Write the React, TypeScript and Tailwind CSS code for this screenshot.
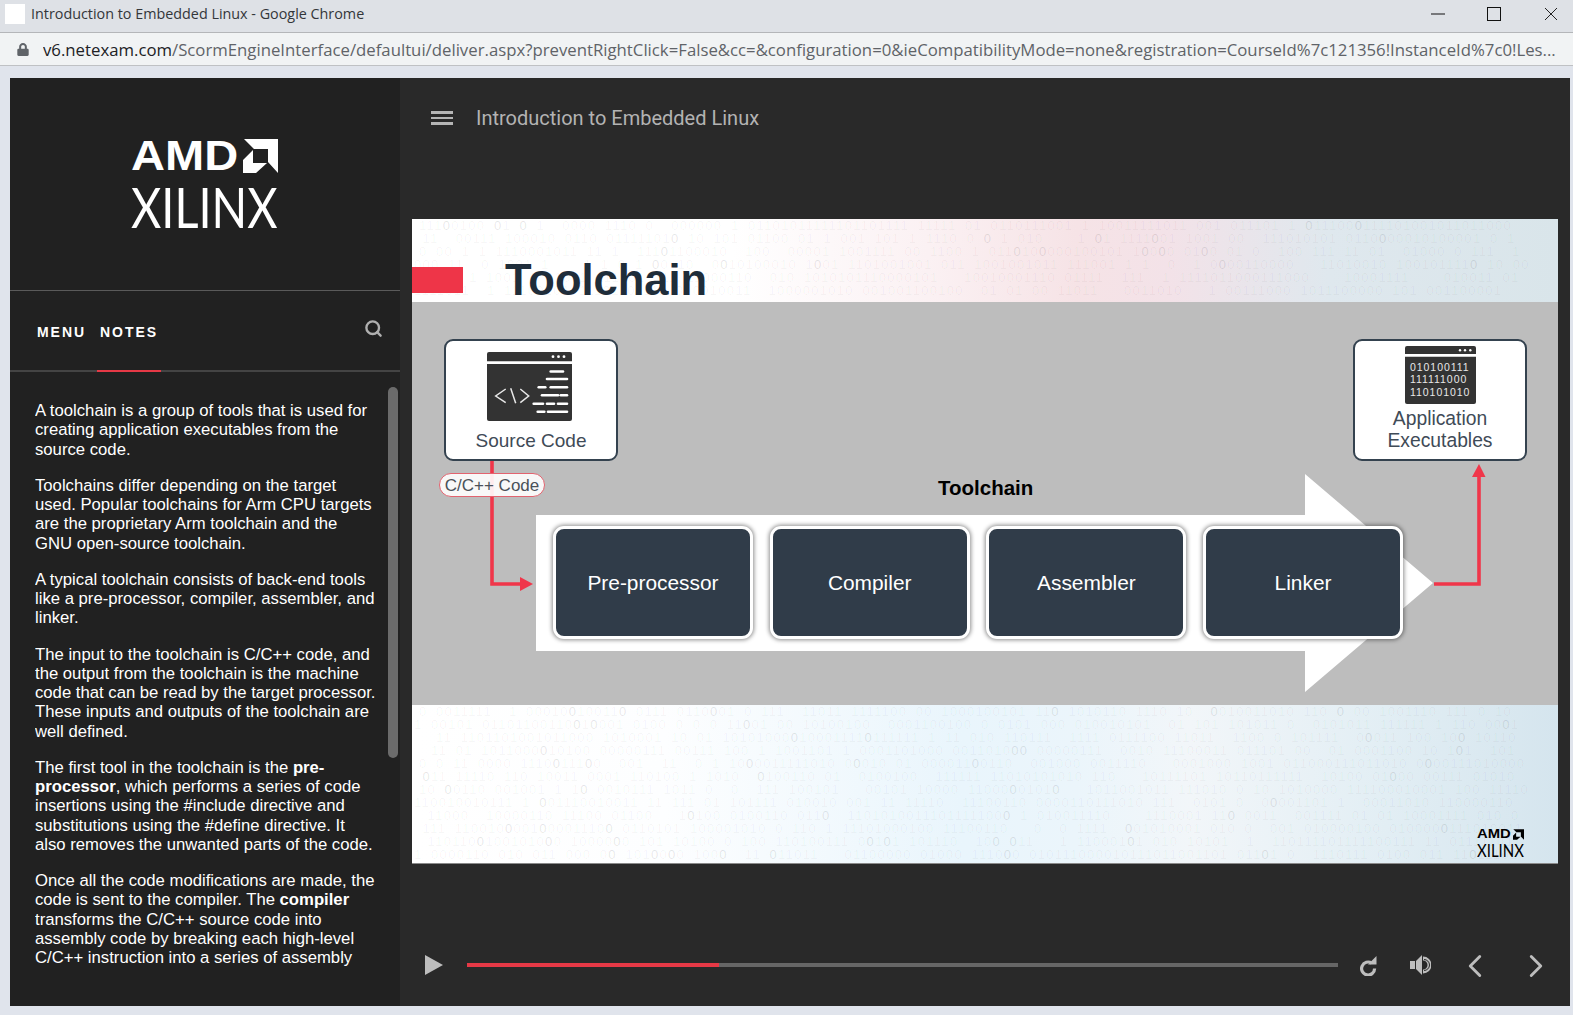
import { ChevronLeft, ChevronRight, Search } from "lucide-react";
import { FaLock } from "react-icons/fa";

// deterministic binary noise for the slide background
function binaryRows(seed: number, rows: number, cols: number) {
  let s = seed;
  const next = () => {
    s = (s * 1103515245 + 12345) & 0x7fffffff;
    return (s >> 8) / (0x7fffffff >> 8);
  };
  return Array.from({ length: rows }, () =>
    Array.from({ length: cols }, () => {
      const r = next();
      if (r < 0.2) return { c: "\u2007", dark: false };
      return { c: r < 0.62 ? "1" : "0", dark: r > 0.965 };
    })
  );
}

function BinaryBg({ seed, rows }: { seed: number; rows: number }) {
  const data = binaryRows(seed, rows, 132);
  return (
    <div className="absolute inset-0 overflow-hidden font-['Liberation_Sans',sans-serif] text-[13px] leading-[13px] tracking-[1.300px] whitespace-nowrap text-black/[.04] select-none">
      {data.map((row, i) => (
        <div key={i} className={i % 2 ? "ml-[2px]" : "ml-[7px]"}>
          {row.map((d, j) =>
            d.dark ? (
              <span key={j} className="text-black/[.1]">
                {d.c}
              </span>
            ) : (
              d.c
            )
          )}
        </div>
      ))}
    </div>
  );
}

function AmdArrow({ className }: { className: string }) {
  return (
    <svg viewBox="0 0 35 34" className={className} fill="currentColor">
      <path d="M1 0H35V34L25 23V10H11Z" />
      <path d="M0 34V21L10 11V24H24L13 34Z" />
    </svg>
  );
}

function CodeIcon() {
  const bars = [
    [63.7, 76, 19.5],
    [60, 67, 27],
    [68, 80, 27],
    [51.7, 58.3, 35.3],
    [63.7, 80, 35.3],
    [55, 71, 43.3],
    [73.7, 80, 43.3],
    [46.7, 56, 51.7],
    [60, 67, 51.7],
    [71, 80, 51.7],
    [50.7, 57.3, 59.7],
    [61, 80, 59.7],
  ];
  return (
    <svg width="85" height="69" viewBox="0 0 85 69" className="-ml-[3px] block">
      <path d="M0 9.3V2a2 2 0 0 1 2-2h81a2 2 0 0 1 2 2v7.3Z" fill="#333" />
      <path d="M0 12h85v55a2 2 0 0 1-2 2H2a2 2 0 0 1-2-2Z" fill="#333" />
      <circle cx="66" cy="4.7" r="1.4" fill="#fff" />
      <circle cx="71.5" cy="4.7" r="1.4" fill="#fff" />
      <circle cx="77" cy="4.7" r="1.4" fill="#fff" />
      {bars.map(([a, b, y], i) => (
        <line key={i} x1={a} x2={b} y1={y} y2={y} stroke="#fff" strokeWidth="2.6" strokeLinecap="round" />
      ))}
      <path
        d="M18.7 37 8.7 44l10 6.7M23.7 36.3l5 15M33.3 37l8.4 7-8.4 6.7"
        fill="none"
        stroke="#e8e8e8"
        strokeWidth="1.5"
      />
    </svg>
  );
}

function BinaryIcon() {
  return (
    <svg width="71" height="58" viewBox="0 0 71 58" className="block">
      <path d="M0 8V2a2 2 0 0 1 2-2h67a2 2 0 0 1 2 2v6Z" fill="#333" />
      <path d="M0 10.7h71V56a2 2 0 0 1-2 2H2a2 2 0 0 1-2-2Z" fill="#333" />
      <circle cx="55" cy="4.3" r="1.2" fill="#fff" />
      <circle cx="60" cy="4.3" r="1.2" fill="#fff" />
      <circle cx="65.3" cy="4.3" r="1.2" fill="#fff" />
      <g fill="#e8e8e8" fontFamily="Liberation Sans, sans-serif" fontSize="10.5" letterSpacing="0.95">
        <text x="5" y="24.5">010100111</text>
        <text x="5" y="37">111111000</text>
        <text x="5" y="49.7">110101010</text>
      </g>
    </svg>
  );
}

function Stage({ name }: { name: string }) {
  return (
    <div className="flex h-[113px] w-[200px] shrink-0 items-center justify-center rounded-[11px] border-[3px] border-white bg-[#303c49] text-[20.9px] text-white shadow-[0_0_4px_1px_rgba(0,0,0,.45)]">
      {name}
    </div>
  );
}

function Diagram() {
  return (
    <div className="relative h-[403px] shrink-0 bg-[#bdbdbd] font-['Liberation_Sans',sans-serif]">
      {/* white arrow + connectors, coordinates relative to the gray panel */}
      <svg className="absolute inset-0" width="1146" height="402" viewBox="0 0 1146 402">
        <path d="M124 213H893V172L1021 281L893 390V349H124Z" fill="#fff" />
        <path d="M80 158V282H110" fill="none" stroke="#f0364a" strokeWidth="3.6" />
        <path d="M108 275l13 7-13 7Z" fill="#f0364a" />
        <path d="M1022 282H1067V174" fill="none" stroke="#f0364a" strokeWidth="3.6" />
        <path d="M1060 175l7-13 6.500 13Z" fill="#f0364a" />
      </svg>

      <div className="absolute left-[32px] top-[37px] flex h-[122px] w-[174px] flex-col items-center rounded-[9px] border-2 border-[#34424f] bg-white pt-[11px] text-[19px] leading-[22px] text-[#3f4b57]">
        <CodeIcon />
        <div className="mt-[9px]">Source Code</div>
      </div>

      <div className="absolute left-[27px] top-[171px] flex h-[24px] w-[106px] items-center justify-center rounded-full border border-[#e2636f] bg-white/90 pt-[1px] text-[17px] text-[#4a5159]">
        C/C++ Code
      </div>

      <div className="absolute left-[941px] top-[37px] flex h-[122px] w-[174px] flex-col items-center rounded-[9px] border-2 border-[#34424f] bg-white pt-[5px] text-center text-[19.3px] leading-[21.500px] text-[#3f4b57]">
        <BinaryIcon />
        <div className="mt-[4px]">
          Application
          <br />
          Executables
        </div>
      </div>

      <div className="absolute left-[526px] top-[174px] text-[20.5px] leading-6 font-bold text-black">Toolchain</div>

      <div className="absolute left-[141px] top-[224px] flex gap-[16.700px]">
        <Stage name="Pre-processor" />
        <Stage name="Compiler" />
        <Stage name="Assembler" />
        <Stage name="Linker" />
      </div>
    </div>
  );
}

function Slide() {
  return (
    <div className="flex h-[645px] w-[1146px] flex-col border-b border-[#8a8a8a] bg-white">
      <div className="relative h-[83px] shrink-0 overflow-hidden bg-[linear-gradient(90deg,#fff_0%,#fff_28%,#fbf1f3_45%,#f6e3e6_58%,#f3e2e8_66%,#dfe8ee_80%,#d9e5ea_100%)]">
        <BinaryBg seed={7} rows={6} />
        <div className="absolute left-0 top-[48px] h-[26px] w-[51px] bg-[#ee3548]" />
        <div className="absolute left-[93px] top-[38px] font-['Liberation_Sans',sans-serif] text-[43.500px] leading-[46px] font-bold text-[#1f2d3a]">
          Toolchain
        </div>
      </div>
      <Diagram />
      <div className="relative flex-1 overflow-hidden bg-[linear-gradient(90deg,#fff_0%,#fdfeff_22%,#e9f5fc_48%,#ebf5fb_58%,#f2f6f9_68%,#e2eef4_85%,#d5e5ee_100%)]">
        <BinaryBg seed={91} rows={12} />
        <div className="absolute left-[1065px] top-[123px] w-[47px] text-black">
          <div className="flex items-center justify-between">
            <span className="origin-left scale-x-[1.1] font-['Liberation_Sans',sans-serif] text-[13.500px] leading-[12px] font-bold">AMD</span>
            <AmdArrow className="h-[11px] w-[11px]" />
          </div>
          <div className="mt-[2px] origin-left scale-x-[.83] font-['Lato',sans-serif] text-[18px] leading-[16px] whitespace-nowrap">XILINX</div>
        </div>
      </div>
    </div>
  );
}

function RepeatIcon() {
  return (
    <svg width="17" height="20" viewBox="0 0 17 20" className="block" fill="#bdbdbd">
      <path d="M16.500 0V8.500H8Z" />
      <path d="M11.800 7.200A6.500 6.500 0 1 0 14.600 12.500" fill="none" stroke="#bdbdbd" strokeWidth="3.200" />
    </svg>
  );
}

function SpeakerIcon() {
  return (
    <svg width="21" height="20" viewBox="0 0 21 20" className="block" fill="#bdbdbd">
      <rect x="0" y="6" width="5" height="8" />
      <path d="M6 6 12 0v20l-6-6Z" />
      <path d="M13 1.500a8.500 8.500 0 0 1 0 17v-4a4.500 4.500 0 0 0 0-9Z" />
      <path d="M14 4.500a5.500 5.500 0 0 1 0 11" fill="none" stroke="#292929" strokeWidth="1" />
    </svg>
  );
}

export default function App() {
  return (
    <div className="flex h-screen w-full flex-col overflow-hidden bg-[#e0e4ec] font-['Liberation_Sans',sans-serif]">
      {/* chrome title bar */}
      <div className="flex h-[33px] shrink-0 items-center border-b border-[#b4b6b9] bg-[#dee1e6] pb-[5px] pl-[5px]">
        <div className="h-[20px] w-[20px] bg-white" />
        <span className="ml-[6px] font-['Open_Sans',sans-serif] text-[14.350px] text-[#33363a]">
          Introduction to Embedded Linux - Google Chrome
        </span>
        <div className="ml-auto flex items-center">
          <svg width="14" height="2" className="mr-[42px]">
            <rect width="14" height="1" y="0.5" fill="#111" />
          </svg>
          <svg width="14" height="14" className="mr-[43px]">
            <rect x="0.500" y="0.500" width="13" height="13" fill="none" stroke="#111" />
          </svg>
          <svg width="14" height="14" className="mr-[15px]">
            <path d="M1 1 13 13M13 1 1 13" stroke="#222" />
          </svg>
        </div>
      </div>

      {/* url bar */}
      <div className="flex h-[33px] shrink-0 items-center border-b border-[#bfc1c4] bg-[#f1f3f4] pl-[17px]">
        <FaLock className="mt-[1px] h-[13px] w-[12px] text-[#5f6368]" />
        <div className="ml-[14px] mt-[2px] w-[1516px] overflow-hidden whitespace-nowrap font-['Open_Sans',sans-serif] text-[16.750px] leading-[24px] text-[#5f6368]">
          <span className="text-[#202124]">v6.netexam.com</span>
          /ScormEngineInterface/defaultui/deliver.aspx?preventRightClick=False&amp;cc=&amp;configuration=0&amp;ieCompatibilityMode=none&amp;registration=CourseId%7c121356!InstanceId%7c0!Les...
        </div>
      </div>

      {/* player */}
      <div className="flex min-h-0 flex-1 pb-[9px] pl-[10px] pr-[3px] pt-[12px]">
        <aside className="flex w-[390px] shrink-0 flex-col bg-[#212121]">
          <div className="flex h-[213px] shrink-0 flex-col items-center border-b border-[#5a5a5a] pt-[60px] text-white">
            <div className="flex w-[145px] items-center justify-between">
              <span className="-ml-[2px] mt-[1px] origin-left scale-x-[1.12] text-[42px] leading-[34px] font-bold">AMD</span>
              <AmdArrow className="h-[34px] w-[35px]" />
            </div>
            <div className="mt-[8px] -ml-[2px] w-[147px] origin-left scale-x-[.82] font-['Lato',sans-serif] text-[57px] leading-[50px] whitespace-nowrap">
              XILINX
            </div>
          </div>

          <div className="flex h-[81px] shrink-0 items-stretch border-b-2 border-[#444] pl-[27px] pr-[17px]">
            <div className="flex items-center pt-[4px] text-[14px] font-bold tracking-[1.950px] text-white">MENU</div>
            <div className="relative ml-[11px] -mb-[2px] flex w-[64px] items-center justify-center border-b-2 border-[#e63946] pt-[4px] text-[14px] font-bold tracking-[2px] text-white">
              NOTES
            </div>
            <Search className="ml-auto mt-[28px] h-[19px] w-[19px] text-[#b0b0b0]" strokeWidth={3} />
          </div>

          <div className="relative flex-1 overflow-hidden">
            <div className="ml-[25px] mt-[29px] h-[569px] w-[342px] overflow-hidden text-[16.700px] leading-[19.250px] text-white">
              <p className="mb-[17px]">
                A toolchain is a group of tools that is used for creating application executables from the source code.
              </p>
              <p className="mb-[17px]">
                Toolchains differ depending on the target used. Popular toolchains for Arm CPU targets are the proprietary
                Arm toolchain and the GNU open-source toolchain.
              </p>
              <p className="mb-[17px]">
                A typical toolchain consists of back-end tools like a pre-processor, compiler, assembler, and linker.
              </p>
              <p className="mb-[17px]">
                The input to the toolchain is C/C++ code, and the output from the toolchain is the machine code that can be
                read by the target processor. These inputs and outputs of the toolchain are well defined.
              </p>
              <p className="mb-[17px]">
                The first tool in the toolchain is the <b>pre-processor</b>, which performs a series of code insertions using
                the #include directive and substitutions using the #define directive. It also removes the unwanted parts of
                the code.
              </p>
              <p>
                Once all the code modifications are made, the code is sent to the compiler. The <b>compiler</b> transforms
                the C/C++ source code into assembly code by breaking each high-level C/C++ instruction into a series of
                assembly
              </p>
            </div>
            <div className="absolute left-[378px] top-[15px] h-[371px] w-[10px] rounded-full bg-[#6b6b6b]" />
          </div>
        </aside>

        <main className="flex min-w-0 flex-1 flex-col bg-[#292929]">
          <header className="flex h-[141px] shrink-0 items-start pl-[31px] pt-[28px]">
            <div className="flex h-[24px] flex-col justify-center gap-[3px]">
              <div className="h-[2.500px] w-[22px] bg-[#b5b5b5]" />
              <div className="h-[2.500px] w-[22px] bg-[#b5b5b5]" />
              <div className="h-[2.500px] w-[22px] bg-[#b5b5b5]" />
            </div>
            <h1 className="ml-[23px] font-['Roboto',sans-serif] text-[20px] leading-[24px] text-[#b3b3b3]">
              Introduction to Embedded Linux
            </h1>
          </header>

          <div className="shrink-0 pl-[12px]">
            <Slide />
          </div>

          <div className="flex flex-1 items-start pl-[25px] pt-[91px]">
            <svg width="18" height="20" viewBox="0 0 18 20" className="block">
              <path d="M0 0 18 10 0 20Z" fill="#bdbdbd" />
            </svg>
            <div className="ml-[24px] mt-[8px] flex h-[3.500px] w-[871px] bg-[#666]">
              <div className="h-full w-[252px] bg-[#e63946]" />
            </div>
            <div className="ml-[22px] mt-[1px]">
              <RepeatIcon />
            </div>
            <div className="ml-[33px]">
              <SpeakerIcon />
            </div>
            <ChevronLeft className="ml-[25px] -mt-[8px] h-[38px] w-[38px] text-[#bdbdbd]" strokeWidth={1.8} />
            <ChevronRight className="ml-[23px] -mt-[8px] h-[38px] w-[38px] text-[#bdbdbd]" strokeWidth={1.8} />
          </div>
        </main>
      </div>
    </div>
  );
}
